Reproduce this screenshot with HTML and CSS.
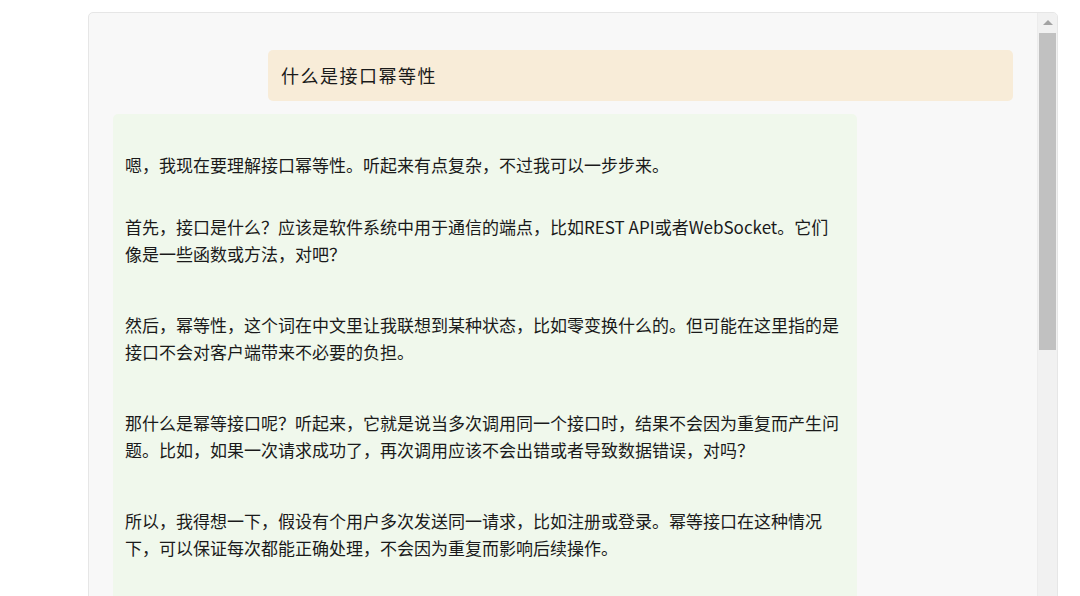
FILE: index.html
```html
<!DOCTYPE html>
<html lang="zh-CN">
<head>
<meta charset="utf-8">
<title>Chat</title>
<link rel="stylesheet" href="styles.css">
</head>
<body>
<div class="panel">
  <div class="chat">
    <div class="msg-user">什么是接口幂等性</div>
    <div class="msg-bot">
      <p class="p1">嗯，我现在要理解接口幂等性。听起来有点复杂，不过我可以一步步来。</p>
      <p class="p2">首先，接口是什么？应该是软件系统中用于通信的端点，比如REST API或者WebSocket。它们像是一些函数或方法，对吧？</p>
      <p>然后，幂等性，这个词在中文里让我联想到某种状态，比如零变换什么的。但可能在这里指的是接口不会对客户端带来不必要的负担。</p>
      <p>那什么是幂等接口呢？听起来，它就是说当多次调用同一个接口时，结果不会因为重复而产生问题。比如，如果一次请求成功了，再次调用应该不会出错或者导致数据错误，对吗？</p>
      <p>所以，我得想一下，假设有个用户多次发送同一请求，比如注册或登录。幂等接口在这种情况下，可以保证每次都能正确处理，不会因为重复而影响后续操作。</p>
    </div>
  </div>
  <div class="scrollbar">
    <div class="arrow"></div>
    <div class="thumb"></div>
  </div>
</div>
</body>
</html>
```

FILE: styles.css
```css
html, body {
  margin: 0;
  padding: 0;
  background: #ffffff;
  height: 100%;
  overflow: hidden;
}
body {
  font-family: "Noto Sans CJK SC", "Noto Sans", sans-serif;
  color: #1a1a1a;
  padding: 12px 0 0 88px;
  box-sizing: border-box;
}
.panel {
  width: 970px;
  height: 700px;
  box-sizing: border-box;
  border: 1px solid #e6e6e6;
  border-radius: 5px;
  background: #f8f8f8;
  display: flex;
  overflow: hidden;
}
.chat {
  flex: 1;
  padding: 37px 24px 0 24px;
  display: flex;
  flex-direction: column;
}
.msg-user {
  align-self: flex-end;
  width: 745px;
  height: 52px;
  box-sizing: border-box;
  background: #f8ecd8;
  border-radius: 5px;
  padding: 0 13px;
  font-size: 18px;
  letter-spacing: 1.5px;
  line-height: 51px;
  color: #1a1a1a;
}
.msg-bot {
  margin-top: 13px;
  width: 744px;
  min-height: 600px;
  box-sizing: border-box;
  background: #f0f8ec;
  border-radius: 5px;
  padding: 37px 12px 20px 12px;
  font-size: 17px;
  line-height: 27px;
  color: #1a1a1a;
}
.msg-bot p {
  margin: 0 0 44px 0;
}
.msg-bot p.p1 {
  margin-bottom: 35px;
}
.scrollbar {
  width: 19px;
  background: #f1f1f1;
  border-left: 1px solid #ececec;
  display: flex;
  flex-direction: column;
  align-items: center;
}
.arrow {
  margin-top: 7px;
  width: 0;
  height: 0;
  border-left: 5px solid transparent;
  border-right: 5px solid transparent;
  border-bottom: 5px solid #a3a3a3;
}
.thumb {
  margin-top: 8px;
  width: 17px;
  height: 317px;
  background: #c1c1c1;
}
```
